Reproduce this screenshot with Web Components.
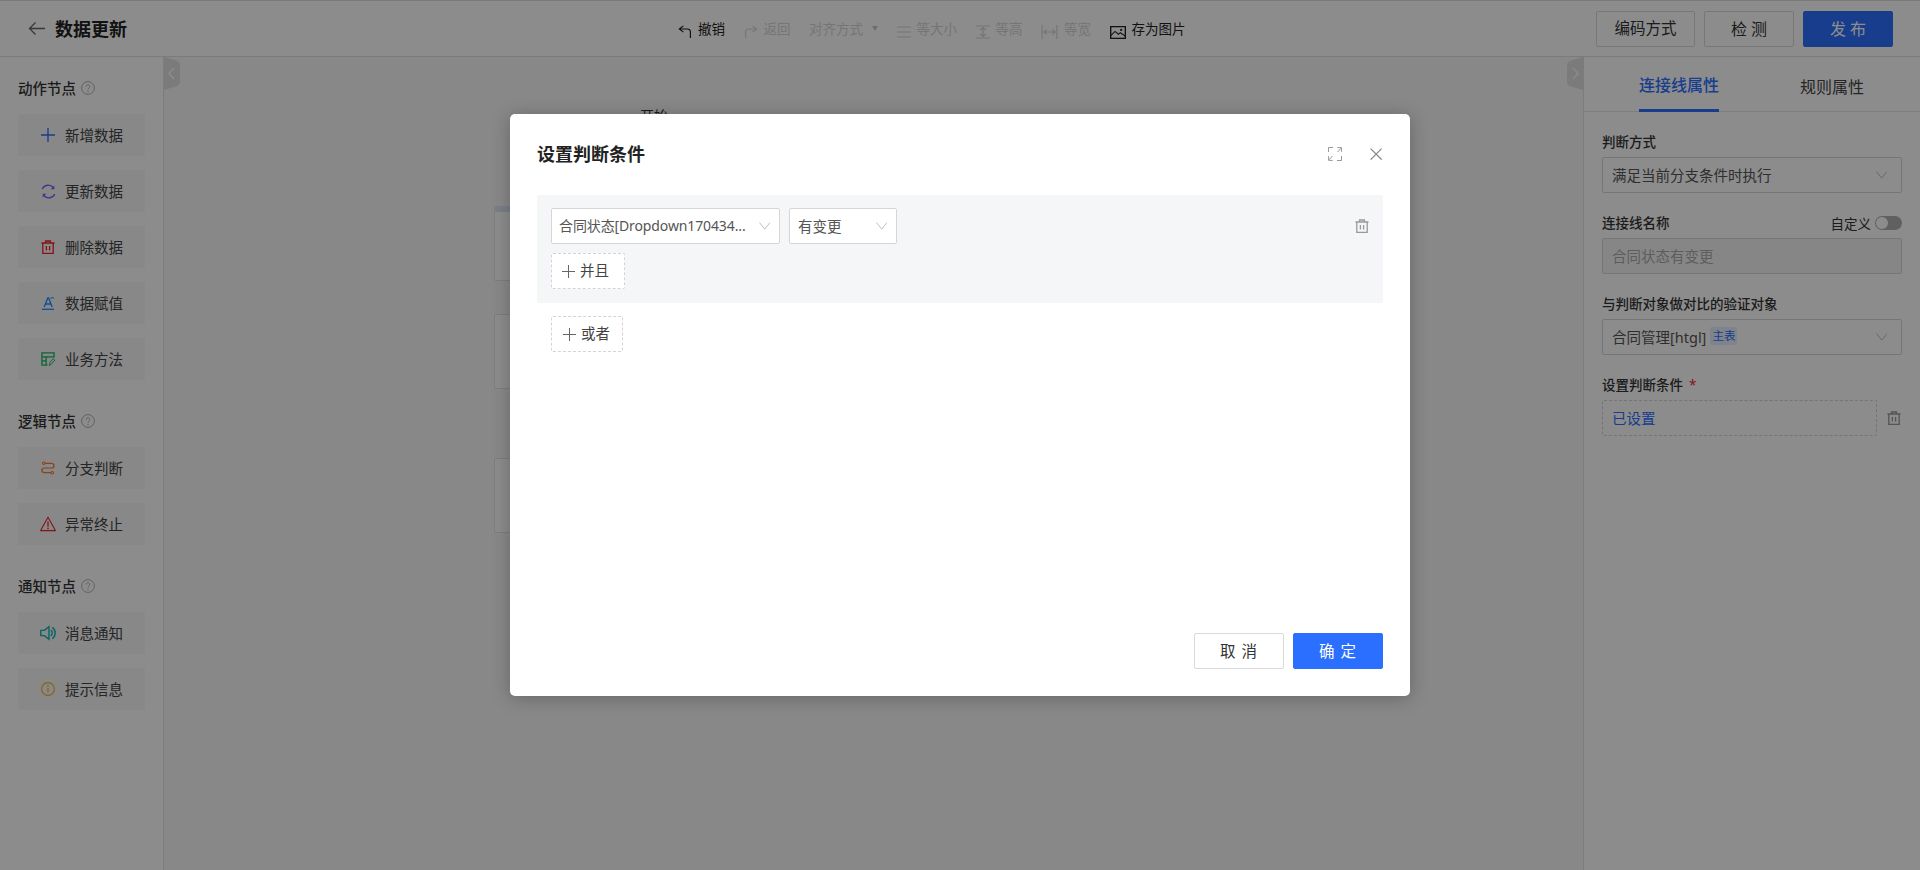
<!DOCTYPE html>
<html lang="zh"><head><meta charset="utf-8"><title>数据更新</title>
<style>
html,body{margin:0;height:100%;overflow:hidden;background:#fff}
body{font-family:"Noto Sans","Noto Sans CJK SC","Liberation Sans",sans-serif;color:#333}
</style></head><body>
<flow-app></flow-app>
<script>
const I={
back:'<path d="M17 8.5H1.5M7.5 2.5l-6 6 6 6" fill="none" stroke="currentColor" stroke-width="1.3"/>',
help:'<circle cx="7" cy="7" r="6.4" fill="none" stroke="currentColor"/><path d="M5.2 5.5a1.8 1.8 0 1 1 2.8 1.5c-.7.5-1 .8-1 1.6" fill="none" stroke="currentColor"/><circle cx="7" cy="10.5" r=".7" fill="currentColor"/>',
plus:'<path d="M7 0v14M0 7h14" fill="none" stroke="currentColor" stroke-width="1.3"/>',
plusthin:'<path d="M7 0v14M0 7h14" fill="none" stroke="currentColor" stroke-width="1.1"/>',
refresh:'<path d="M1.3 5.4A7 7 0 0 1 13.2 4M14.7 10.6A7 7 0 0 1 2.8 12" fill="none" stroke="currentColor" stroke-width="1.4"/><path d="M14.2 1.6v4h-3.8zM1.8 14.4v-4h3.8z" fill="currentColor"/>',
trash:'<path d="M.5 3h13M4.6 3V1h4.8v2M1.8 3v10.4h10.4V3M5.4 6v4.6M8.6 6v4.6" fill="none" stroke="currentColor" stroke-width="1.3"/>',
assign:'<path d="M3.2 11 6.8 2h.8l3.6 9M4.6 8h5.2" fill="none" stroke="currentColor" stroke-width="1.3"/><path d="M9.4 2.4q1.5-1.4 3.6-.2" fill="none" stroke="currentColor"/><path d="M1 13.3h12" fill="none" stroke="currentColor" stroke-width="1.3"/>',
method:'<path d="M14 6V1H1v13h6M1 5.2h13M5.5 5.2V14M1 9.6h4.5" fill="none" stroke="currentColor" stroke-width="1.4"/><path d="M9 14.6l.6-3.4 3.4-4 1.8 1.5-3.4 4z" fill="none" stroke="currentColor"/>',
branch:'<path d="M4.4 2.6h6.8a2.7 2.7 0 0 1 0 5.4H3.6a2.7 2.7 0 0 0 0 5.4h7" fill="none" stroke="currentColor" stroke-width="1.4"/><circle cx="3" cy="2.6" r="1.4" fill="none" stroke="currentColor" stroke-width="1.2"/><circle cx="12" cy="13.4" r="1.4" fill="none" stroke="currentColor" stroke-width="1.2"/>',
warn:'<path d="M8 1.2 15.4 14.6H.6z" fill="none" stroke="currentColor" stroke-width="1.1" stroke-linejoin="round"/><path d="M8 5.6v5" stroke="currentColor" stroke-width="1.3"/><circle cx="8" cy="12.4" r=".8" fill="currentColor"/>',
sound:'<path d="M.8 5.4h3.6L9 1.8v12.4L4.4 10.6H.8z" fill="none" stroke="currentColor" stroke-width="1.4"/><path d="M10.8 5.2a3.4 3.4 0 0 1 0 5.6M12.4 2.4a7 7 0 0 1 0 11.2" fill="none" stroke="currentColor" stroke-width="1.4"/>',
info:'<circle cx="7" cy="7" r="6.4" fill="none" stroke="currentColor" stroke-width="1.1"/><path d="M7 6v4.6" stroke="currentColor" stroke-width="1.2"/><circle cx="7" cy="3.9" r=".8" fill="currentColor"/>',
undo:'<path d="M11.5 13V6.8a2.8 2.8 0 0 0-2.8-2.8H1.5M5 .8 1.2 4 5 7.2" fill="none" stroke="currentColor" stroke-width="1.1"/>',
redo:'<path d="M1.5 13V6.8A2.8 2.8 0 0 1 4.3 4h7.2M8 .8 11.8 4 8 7.2" fill="none" stroke="currentColor" stroke-width="1.1"/>',
same:'<path d="M0 2h13M0 7h13M0 12h13" fill="none" stroke="currentColor" stroke-width="1.1"/>',
tall:'<path d="M0 1h13M0 13h13M6.5 2.5v9M4 5l2.5-2.5L9 5M4 9l2.5 2.5L9 9" fill="none" stroke="currentColor" stroke-width="1.1"/>',
wide:'<path d="M1 0v13M14 0v13M2.5 6.5h10M5 4 2.5 6.5 5 9M10 4l2.5 2.5L10 9" fill="none" stroke="currentColor" stroke-width="1.1"/>',
image:'<rect x=".6" y="1.6" width="12.8" height="10.8" fill="none" stroke="currentColor" stroke-width="1.2"/><path d="M.8 9.6 4.4 6l3 2.6L9 7.2l4.4 3.2" fill="none" stroke="currentColor"/><circle cx="9.8" cy="4.6" r="1" fill="currentColor"/>',
chev:'<path d="M.5.5 5.75 7.2 11 .5" fill="none" stroke="currentColor"/>',
expand:'<path d="M.5 5V.5H5M9.5 5 13 1.2M9.3.6h4.2v4.2M4.5 9 1 12.8M.6 9.2v4.2h4.2M13.5 9v4.5H9" fill="none" stroke="currentColor"/>',
close:'<path d="M.6.6l11 11M11.6.6l-11 11" fill="none" stroke="currentColor" stroke-width="1.3"/>'
};
const VB={back:'0 0 18 17',help:'0 0 14 14',plus:'0 0 14 14',plusthin:'0 0 14 14',refresh:'0 0 16 16',trash:'0 0 14 14',assign:'0 0 14 14',method:'0 0 15 15',branch:'0 0 15 16',warn:'0 0 16 16',sound:'0 0 16 16',info:'0 0 14 14',undo:'0 0 13 14',redo:'0 0 13 14',same:'0 0 13 14',tall:'0 0 13 14',wide:'0 0 15 13',image:'0 1 14 12',chev:'0 0 11.5 8',expand:'0 0 14 14',close:'0 0 12 12'};
function svg(n,w,h){return `<svg viewBox="${VB[n]}" width="${w}" height="${h||w}" preserveAspectRatio="none" style="display:block;flex:none" aria-hidden="true">${I[n]}</svg>`}

class Base extends HTMLElement{
  constructor(){super();this.attachShadow({mode:'open'})}
  connectedCallback(){if(!this.shadowRoot.innerHTML)this.shadowRoot.innerHTML=this.view()}
  a(n,d=''){return this.getAttribute(n)??d}
}
const def=(t,view)=>customElements.define(t,class extends Base{view(){return view.call(this)}});

def('ui-icon',function(){
  return `<style>:host{display:block;flex:none;color:${this.a('color','currentColor')}}</style>${svg(this.a('name'),+this.a('w',14),+this.a('h',this.a('w',14)))}`;
});

def('top-bar',function(){return `<style>
:host{display:flex;align-items:center;height:55px;border-top:1px solid #dcdcdc;border-bottom:1px solid #e0e0e0;background:#fff;padding:0 27px 0 28px}
.left{display:flex;align-items:center;gap:9px;width:650px;flex:none;font-size:18px;font-weight:700;color:#222}
.left span{padding-bottom:2px}
.tools{display:flex;gap:18.5px;align-items:center;padding-top:2px}
.act{display:flex;gap:9px;margin-left:auto}
</style>
<div class="left"><ui-icon name="back" w="18" h="17" color="#666"></ui-icon><span>数据更新</span></div>
<div class="tools">
<tool-item icon="undo" iw="14" ih="14">撤销</tool-item>
<tool-item icon="redo" iw="14" ih="14" off>返回</tool-item>
<tool-item off caret>对齐方式</tool-item>
<tool-item icon="same" iw="14" ih="14" off>等大小</tool-item>
<tool-item icon="tall" iw="14" ih="14" off>等高</tool-item>
<tool-item icon="wide" iw="17" ih="14" off>等宽</tool-item>
<tool-item icon="image" iw="16" ih="13">存为图片</tool-item>
</div>
<div class="act"><head-btn w="99">编码方式</head-btn><head-btn w="90">检 测</head-btn><head-btn w="90" primary>发 布</head-btn></div>`});

def('tool-item',function(){const off=this.hasAttribute('off');return `<style>
:host{display:flex;align-items:center;gap:6px;font-size:13.5px;line-height:18px;color:${off?'#d6d6d6':'#222'}}
i{width:0;height:0;border:3.5px solid transparent;border-top:5px solid ${off?'#c8c8c8':'#222'};border-bottom:0;margin:0 0 3px 3px}
.g{padding-top:5px}
span{padding-bottom:1px}
</style>${this.a('icon')?`<div class="g">${svg(this.a('icon'),+this.a('iw'),+this.a('ih'))}</div>`:''}<span><slot></slot></span>${this.hasAttribute('caret')?'<i></i>':''}`});

def('head-btn',function(){const p=this.hasAttribute('primary');return `<style>
:host{display:flex;align-items:center;justify-content:center;box-sizing:border-box;width:${this.a('w')}px;height:36px;border-radius:2px;font-size:15.5px;${this.a('w')==='90'?'font-size:16px;':''}
border:1px solid ${p?'#2a6fff':'#d9d9d9'};background:${p?'#2a6fff':'#fff'};color:${p?'#fff':'#333'}}
span{padding-bottom:2px}
</style><span><slot></slot></span>`});

def('side-panel',function(){return `<style>
:host{display:block;box-sizing:border-box;width:164px;border-right:1px solid #e2e2e2;background:#fff;padding:21px 18px 0;flex:none;height:100%}
</style><slot></slot>`});

def('sec-title',function(){return `<style>
:host{display:flex;align-items:center;gap:5px;height:20px;font-size:14.5px;font-weight:500;color:#333;margin-bottom:16px}
:host(:not(:first-child)){margin-top:31px}
span{padding-bottom:2px}
</style><span><slot></slot></span><ui-icon name="help" w="14" color="#b0b0b0"></ui-icon>`});

def('node-btn',function(){return `<style>
:host{display:flex;align-items:center;box-sizing:border-box;width:127px;height:42px;background:#f7f7f7;border-radius:2px;font-size:14.5px;color:#444;margin-bottom:14px}
.ic{width:16px;height:16px;margin-left:22px;margin-right:9px;display:flex;align-items:center;justify-content:center;flex:none}
span{padding-bottom:2px}
</style><div class="ic"><ui-icon name="${this.a('icon')}" w="${this.a('w',14)}" color="${this.a('color')}"></ui-icon></div><span><slot></slot></span>`});

def('collapse-tab',function(){const r=this.hasAttribute('right');return `<style>
:host{display:block;position:absolute;top:0;${r?'right:0':'left:0'};width:16px;height:33px;color:#e6e6e6}
</style><svg width="16" height="33" viewBox="0 0 16 33" style="display:block;${r?'transform:scaleX(-1)':''}"><path d="M0 0 12 3.5Q16 5 16 8V25Q16 28 12 29.5L0 33z" fill="#e0e0e0"/><path d="M10 11 5 16.5 10 22" fill="none" stroke="#fff" stroke-width="1.2"/></svg>`});

def('flow-canvas',function(){return `<style>
:host{display:block;position:relative;flex:1;height:100%;background:#f7f7f7;overflow:hidden}
.n{position:absolute;left:330px;width:260px;height:75px;box-sizing:border-box;background:#fff;border:1px solid #e4e4e4;border-radius:2px}
.t{position:absolute;left:476px;top:49px;font-size:14px;line-height:20px;color:#333}
</style><collapse-tab></collapse-tab>
<div class="t">开始</div>
<div class="n" style="top:149px;border-top:6px solid #dfe6f5"></div>
<div class="n" style="top:257px"></div>
<div class="n" style="top:401px"></div>`});

def('prop-panel',function(){return `<style>
:host{display:block;position:relative;width:336px;box-sizing:content-box;background:#fff;border-left:1px solid #e2e2e2;flex:none;height:100%}
.out{position:absolute;left:-17px;top:0;width:16px;height:33px}
.tabs{display:flex;height:55px;box-sizing:border-box;border-bottom:1px solid #e4e4e4;padding-left:55px}
.tab{height:55px;box-sizing:border-box;font-size:16px;padding:4px 0 2px;display:flex;align-items:center;color:#444;white-space:nowrap}
.on{color:#2a6fff;font-weight:500;border-bottom:3px solid #2a6fff;margin-right:81px;width:80px}
.form{padding:20px 18px 0;display:flex;flex-direction:column;gap:20px}
</style><div class="out"><collapse-tab right></collapse-tab></div>
<div class="tabs"><div class="tab on">连接线属性</div><div class="tab">规则属性</div></div>
<div class="form"><slot></slot></div>`});

def('prop-field',function(){return `<style>
:host{display:block}
.l{display:flex;align-items:center;height:20px;margin-bottom:5px;font-size:13.5px;font-weight:500;color:#333}
.n{padding-bottom:2px}
.x{margin-left:auto;display:flex;align-items:center;gap:4px;font-weight:400;font-size:13.5px}
</style><div class="l"><span class="n"><slot name="label"></slot></span><div class="x"><slot name="extra"></slot></div></div><slot></slot>`});

def('toggle-switch',function(){return `<style>
:host{display:block;width:27px;height:14px;border-radius:7px;background:#b0b0b0;position:relative}
i{position:absolute;left:1px;top:1px;width:12px;height:12px;background:#fff;border-radius:50%}
</style><i></i>`});

def('select-box',function(){const w=this.a('w');const d=this.hasAttribute('disabled');return `<style>
:host{display:flex;align-items:center;box-sizing:border-box;height:36px;${w?`width:${w}px;`:''}border:1px solid #d6d6d6;border-radius:2px;background:${d?'#f5f5f5':'#fff'};padding:0 ${this.a('pr','14')}px 0 ${this.a('pl','9')}px;font-size:${this.a('fs','14.5')}px;letter-spacing:${this.a('ls','0')}px;color:${d?'#aaa':'#555'};white-space:nowrap;flex:none}
.t{padding-bottom:2px;display:flex;align-items:center}
.c{margin-left:auto;color:#c0c0c0}
</style><span class="t"><slot></slot></span>${this.hasAttribute('nochev')?'':`<div class="c">${svg('chev',11.5,8)}</div>`}`});

def('soft-tag',function(){return `<style>
:host{display:inline-block;box-sizing:border-box;margin-left:4px;width:27px;height:18px;line-height:17px;font-size:11.5px;text-align:center;background:#e8effd;color:#2a6fff;border-radius:2px}
</style><slot></slot>`});

def('dash-btn',function(){return `<style>
:host{display:flex;align-items:center;box-sizing:border-box;height:36px;width:${this.a('w')}px;border:1px dashed #d4d4d4;border-radius:2px;padding-left:${this.a('pl',10)}px;gap:5px;font-size:14.5px;color:#444;background:#fff}
span{padding-bottom:3px}
</style><ui-icon name="plusthin" w="13" color="#666"></ui-icon><span><slot></slot></span>`});

def('cond-panel',function(){return `<style>
:host{display:flex;flex-direction:column;gap:9px;background:#f5f6f8;padding:13px 14px 14px;border-radius:2px}
.r{display:flex;align-items:center;gap:9px}
.r ui-icon{margin-left:auto}
</style>
<div class="r"><select-box w="229" pl="7" pr="9" fs="14" ls="-.12">合同状态[Dropdown170434...</select-box><select-box w="108" pl="8" pr="9">有变更</select-box><ui-icon name="trash" w="14" color="#999"></ui-icon></div>
<div><dash-btn w="74">并且</dash-btn></div>`});

def('modal-dialog',function(){return `<style>
:host{display:flex;flex-direction:column;box-sizing:border-box;width:900px;height:582px;margin-top:114px;background:#fff;border-radius:5px;box-shadow:0 2px 18px rgba(0,0,0,.25);padding:0 27px 27px}
.h{display:flex;align-items:center;height:81px;flex:none;font-size:18px;font-weight:700;color:#222;padding-bottom:1px;box-sizing:border-box}
.h span{flex:1;padding-bottom:2px}
.h ui-icon:last-child{margin-left:28px;margin-right:1px}
.or{margin:13px 0 0 14px}
.f{margin-top:auto;display:flex;justify-content:flex-end;gap:9px}
</style>
<div class="h"><span>设置判断条件</span><ui-icon name="expand" w="14" color="#999"></ui-icon><ui-icon name="close" w="12" color="#888"></ui-icon></div>
<cond-panel></cond-panel>
<div class="or"><dash-btn w="72" pl="11">或者</dash-btn></div>
<div class="f"><foot-btn>取 消</foot-btn><foot-btn primary>确 定</foot-btn></div>`});

def('foot-btn',function(){const p=this.hasAttribute('primary');return `<style>
:host{display:flex;align-items:center;justify-content:center;box-sizing:border-box;width:90px;height:36px;border-radius:2px;font-size:15.5px;letter-spacing:1px;
border:1px solid ${p?'#2a6fff':'#d9d9d9'};background:${p?'#2a6fff':'#fff'};color:${p?'#fff':'#333'}}
span{padding-bottom:2px}
</style><span><slot></slot></span>`});

def('cond-value',function(){return `<style>
:host{display:flex;align-items:center;gap:10px}
.b{display:flex;align-items:center;box-sizing:border-box;width:275px;height:36px;border:1px dashed #d4d4d4;border-radius:2px;padding:0 0 2px 9px;font-size:14.5px;color:#2a6fff}
</style><div class="b">已设置</div><ui-icon name="trash" w="14" color="#999"></ui-icon>`});

def('flow-app',function(){return `<style>
:host{display:flex;flex-direction:column;height:870px;width:1920px;position:relative;overflow:hidden}
.m{display:flex;flex:1;min-height:0}
.veil{position:absolute;inset:0;background:rgba(0,0,0,.45);display:flex;justify-content:center;align-items:flex-start}
</style>
<top-bar></top-bar>
<div class="m">
<side-panel>
<sec-title>动作节点</sec-title>
<node-btn icon="plus" color="#2a6fff">新增数据</node-btn>
<node-btn icon="refresh" w="15" color="#7b61ff">更新数据</node-btn>
<node-btn icon="trash" color="#f5222d">删除数据</node-btn>
<node-btn icon="assign" color="#1890ff">数据赋值</node-btn>
<node-btn icon="method" color="#18b566">业务方法</node-btn>
<sec-title>逻辑节点</sec-title>
<node-btn icon="branch" color="#fa7d2d">分支判断</node-btn>
<node-btn icon="warn" w="16" color="#f5222d">异常终止</node-btn>
<sec-title>通知节点</sec-title>
<node-btn icon="sound" w="16" color="#13b5b1">消息通知</node-btn>
<node-btn icon="info" color="#faad14">提示信息</node-btn>
</side-panel>
<flow-canvas></flow-canvas>
<prop-panel>
<prop-field><span slot="label">判断方式</span><select-box pr="14">满足当前分支条件时执行</select-box></prop-field>
<prop-field><span slot="label">连接线名称</span><span slot="extra">自定义</span><toggle-switch slot="extra"></toggle-switch><select-box disabled nochev>合同状态有变更</select-box></prop-field>
<prop-field><span slot="label">与判断对象做对比的验证对象</span><select-box>合同管理[htgl]<soft-tag>主表</soft-tag></select-box></prop-field>
<prop-field><span slot="label">设置判断条件<b style="color:#f5222d;margin-left:6px;font-weight:400">*</b></span><cond-value></cond-value></prop-field>
</prop-panel>
</div>
<div class="veil"><modal-dialog></modal-dialog></div>`});
</script>
</body></html>
